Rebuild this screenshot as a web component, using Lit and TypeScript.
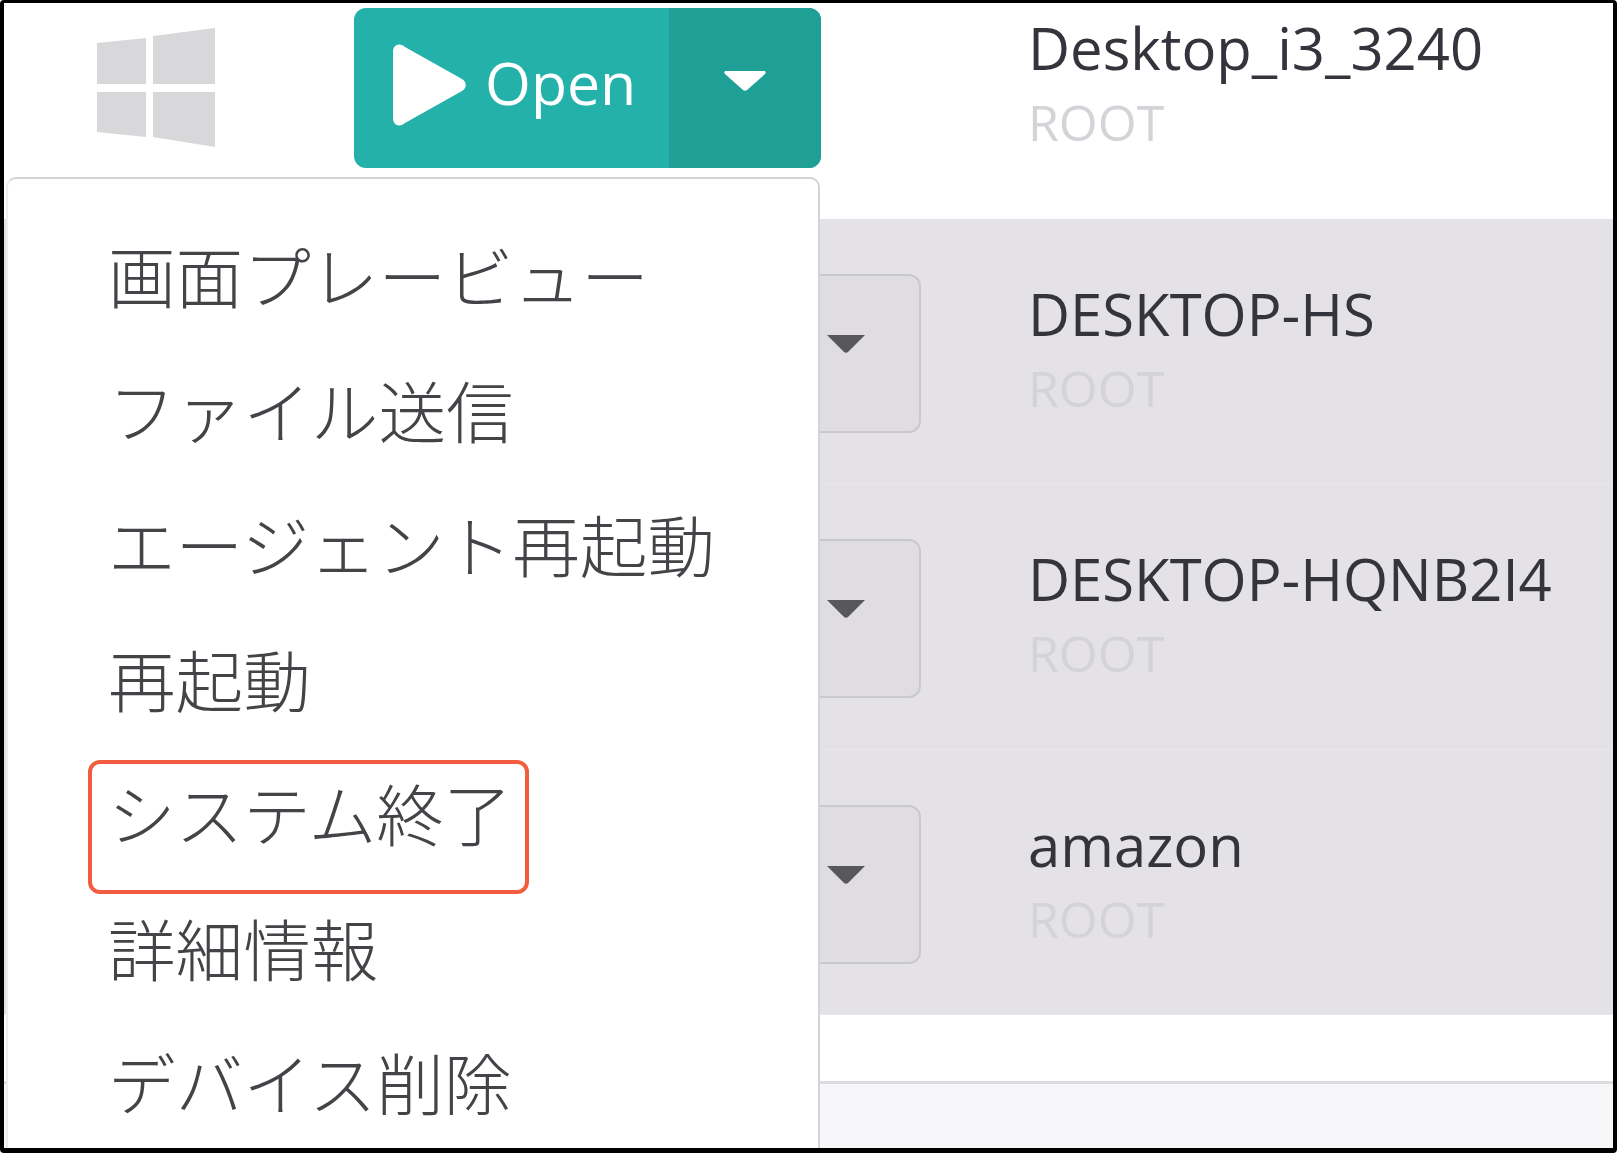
import { LitElement, html, css } from "lit";
import { customElement } from "lit/decorators.js";

const DEVICES = ["Desktop_i3_3240", "DESKTOP-HS", "DESKTOP-HQNB2I4", "amazon"];
const MENU = ["画面プレービュー", "ファイル送信", "エージェント再起動", "再起動", "システム終了", "詳細情報", "デバイス削除"];

@customElement("app-root")
export class AppRoot extends LitElement {
  static styles = css`
    :host { display: block; width: 1617px; height: 1153px; font-family: "Open Sans", "Noto Sans CJK JP", sans-serif; }
    .frame { position: relative; box-sizing: border-box; width: 1617px; height: 1153px; overflow: hidden; background: #fff;
      border-style: solid; border-color: #000; border-width: 3px 4px 5px 4px; border-radius: 4px; }
    .list { margin-top: -50px; }
    .row { box-sizing: border-box; height: 265.6px; display: flex; align-items: flex-start; padding-left: 350px; background: #e4e2e6; border-bottom: 1px solid #e9e8eb; }
    .row.first { background: #fff; border-bottom: none; }
    .split { box-sizing: border-box; margin-top: 55px; width: 567px; height: 159px; display: flex; justify-content: flex-end; background: #dfdde0; border: 2px solid #c9c8cc; border-radius: 12px; }
    .caret { width: 100px; display: flex; justify-content: center; padding: 59px 0 0 0; box-sizing: border-box; }
    .caret svg { width: 40px; height: 18px; margin-right: 46px; fill: #58575a; }
    .open { box-sizing: border-box; margin-top: 55px; width: 467px; height: 160px; display: flex; background: #23b1a9; border-radius: 12px; overflow: hidden; color: #fff; }
    .go { flex: 1; display: flex; align-items: center; padding-left: 38px; gap: 19px; font-size: 59px; }
    .go svg { width: 74px; height: 82px; fill: #fff; flex: none; position: relative; top: -3px; }
    .go span { position: relative; top: -6px; }
    .more { width: 152px; background: #1fa097; display: flex; justify-content: center; padding-top: 63px; box-sizing: border-box; }
    .more svg { width: 42px; height: 20px; fill: #fff; }
    .info { margin-left: 107px; }
    .info.wide { margin-left: 207px; }
    .name { font-size: 58px; line-height: 76px; color: #34343c; white-space: nowrap; margin-top: 57px; }
    .sub { font-size: 50px; line-height: 76px; margin-top: -2px; color: #d4d3d7; }
    .logo { position: absolute; left: 93px; top: 25px; width: 118px; height: 119px; fill: #d8d7da; }
    .foot { margin-top: 66px; height: 80px; border-top: 3px solid #dcdbde; background: #f7f6f9; }
    .menu { position: absolute; left: 2px; top: 174px; width: 814px; height: 1000px; box-sizing: border-box; background: #fff;
      border: 2px solid #d4d3d7; border-left-color: #eeedf0; border-radius: 10px; padding-top: 45px; }
    .item { position: relative; height: 134.5px; padding-left: 100px; font-family: "Noto Sans CJK JP", sans-serif; font-size: 67.6px; line-height: 100px; color: #444448; font-weight: 300; white-space: nowrap; }
    .hl { position: absolute; left: 80px; top: -2px; width: 441px; height: 134px; box-sizing: border-box; border: 4px solid #f25c3f; border-radius: 12px; }
  `;

  render() {
    return html`<div class="frame">
      <div class="list">
        ${DEVICES.map((d, i) => html`<div class="row ${i === 0 ? "first" : ""}">
          ${i === 0
            ? html`<div class="open">
                <div class="go"><svg viewBox="0 0 74 82"><path d="M1 8 C1 1 7 -2 13 3 L70 35 C75 38 75 44 70 47 L13 79 C7 84 1 81 1 74 Z"/></svg><span>Open</span></div>
                <div class="more"><svg viewBox="0 0 42 20"><path d="M2 0 H40 C42 0 42 2 41 3 L23 19 C22 20 20 20 19 19 L1 3 C0 2 0 0 2 0 Z"/></svg></div>
              </div>`
            : html`<div class="split"><div class="caret"><svg viewBox="0 0 40 18"><path d="M1 0 H39 L22 17 C21 18 19 18 18 17 Z"/></svg></div></div>`}
          <div class="info ${i === 0 ? "wide" : ""}">
            <div class="name">${d}</div>
            <div class="sub">ROOT</div>
          </div>
        </div>`)}
        <div class="foot"></div>
      </div>
      <svg class="logo" viewBox="0 0 118 119"><path d="M0 15 L49 10 V56 H0 Z M56 8 L118 0 V56 H56 Z M0 64 H49 V109 L0 104 Z M56 64 H118 V119 L56 109 Z"/></svg>
      <div class="menu">
        ${MENU.map((m, i) => html`<div class="item">${m}${i === 4 ? html`<div class="hl"></div>` : ""}</div>`)}
      </div>
    </div>`;
  }
}
